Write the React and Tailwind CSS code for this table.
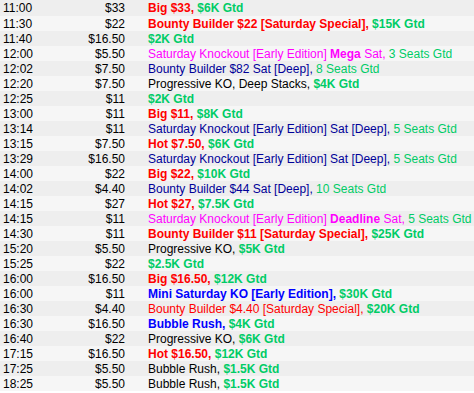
import React from 'react';

// colour classes for the description pieces
const C = {
  red: 'text-[#ff0000]',
  green: 'text-[#00cc66]',
  navy: 'text-[#000099]',
  pink: 'text-[#ff00ff]',
  blue: 'text-[#0000ff]',
  black: 'text-black',
};

// each part: [text, colour, bold]
const rows = [
  ['11:00', '$33', [['Big $33, ', 'red', 1], ['$6K Gtd', 'green', 1]]],
  ['11:30', '$22', [['Bounty Builder $22 [Saturday Special], ', 'red', 1], ['$15K Gtd', 'green', 1]]],
  ['11:40', '$16.50', [['$2K Gtd', 'green', 1]]],
  ['12:00', '$5.50', [['Saturday Knockout [Early Edition] ', 'pink', 0], ['Mega', 'pink', 1], [' Sat, ', 'pink', 0], ['3 Seats Gtd', 'green', 0]]],
  ['12:02', '$7.50', [['Bounty Builder $82 Sat [Deep], ', 'navy', 0], ['8 Seats Gtd', 'green', 0]]],
  ['12:20', '$7.50', [['Progressive KO, Deep Stacks, ', 'black', 0], ['$4K Gtd', 'green', 1]]],
  ['12:25', '$11', [['$2K Gtd', 'green', 1]]],
  ['13:00', '$11', [['Big $11, ', 'red', 1], ['$8K Gtd', 'green', 1]]],
  ['13:14', '$11', [['Saturday Knockout [Early Edition] Sat [Deep], ', 'navy', 0], ['5 Seats Gtd', 'green', 0]]],
  ['13:15', '$7.50', [['Hot $7.50, ', 'red', 1], ['$6K Gtd', 'green', 1]]],
  ['13:29', '$16.50', [['Saturday Knockout [Early Edition] Sat [Deep], ', 'navy', 0], ['5 Seats Gtd', 'green', 0]]],
  ['14:00', '$22', [['Big $22, ', 'red', 1], ['$10K Gtd', 'green', 1]]],
  ['14:02', '$4.40', [['Bounty Builder $44 Sat [Deep], ', 'navy', 0], ['10 Seats Gtd', 'green', 0]]],
  ['14:15', '$27', [['Hot $27, ', 'red', 1], ['$7.5K Gtd', 'green', 1]]],
  ['14:15', '$11', [['Saturday Knockout [Early Edition] ', 'pink', 0], ['Deadline', 'pink', 1], [' Sat, ', 'pink', 0], ['5 Seats Gtd', 'green', 0]]],
  ['14:30', '$11', [['Bounty Builder $11 [Saturday Special], ', 'red', 1], ['$25K Gtd', 'green', 1]]],
  ['15:20', '$5.50', [['Progressive KO, ', 'black', 0], ['$5K Gtd', 'green', 1]]],
  ['15:25', '$22', [['$2.5K Gtd', 'green', 1]]],
  ['16:00', '$16.50', [['Big $16.50, ', 'red', 1], ['$12K Gtd', 'green', 1]]],
  ['16:00', '$11', [['Mini Saturday KO [Early Edition], ', 'blue', 1], ['$30K Gtd', 'green', 1]]],
  ['16:30', '$4.40', [['Bounty Builder $4.40 [Saturday Special], ', 'red', 0], ['$20K Gtd', 'green', 1]]],
  ['16:30', '$16.50', [['Bubble Rush, ', 'blue', 1], ['$4K Gtd', 'green', 1]]],
  ['16:40', '$22', [['Progressive KO, ', 'black', 0], ['$6K Gtd', 'green', 1]]],
  ['17:15', '$16.50', [['Hot $16.50, ', 'red', 1], ['$12K Gtd', 'green', 1]]],
  ['17:25', '$5.50', [['Bubble Rush, ', 'black', 0], ['$1.5K Gtd', 'green', 1]]],
  ['18:25', '$5.50', [['Bubble Rush, ', 'black', 0], ['$1.5K Gtd', 'green', 1]]],
];

export default function App() {
  return (
    <div className="w-[474px] h-[393px] bg-white text-[12px] text-black" style={{ fontFamily: '"Liberation Sans", Arial, sans-serif' }}>
      {rows.map(([time, buyin, parts], i) => (
        <div
          key={i}
          className={`flex items-center whitespace-nowrap leading-none ${i === 0 ? 'h-[16px]' : 'h-[15px]'} ${i % 2 === 0 ? 'bg-[#eeeeee]' : 'bg-[#f6f6f6]'}`}
        >
          <div className="w-[60px] pl-[3px]">{time}</div>
          <div className="w-[65px] text-right">{buyin}</div>
          <div className="pl-[23px]">
            {parts.map(([text, color, bold], j) => (
              <span key={j} className={`${C[color]} ${bold ? 'font-bold' : ''}`}>
                {text}
              </span>
            ))}
          </div>
        </div>
      ))}
    </div>
  );
}
